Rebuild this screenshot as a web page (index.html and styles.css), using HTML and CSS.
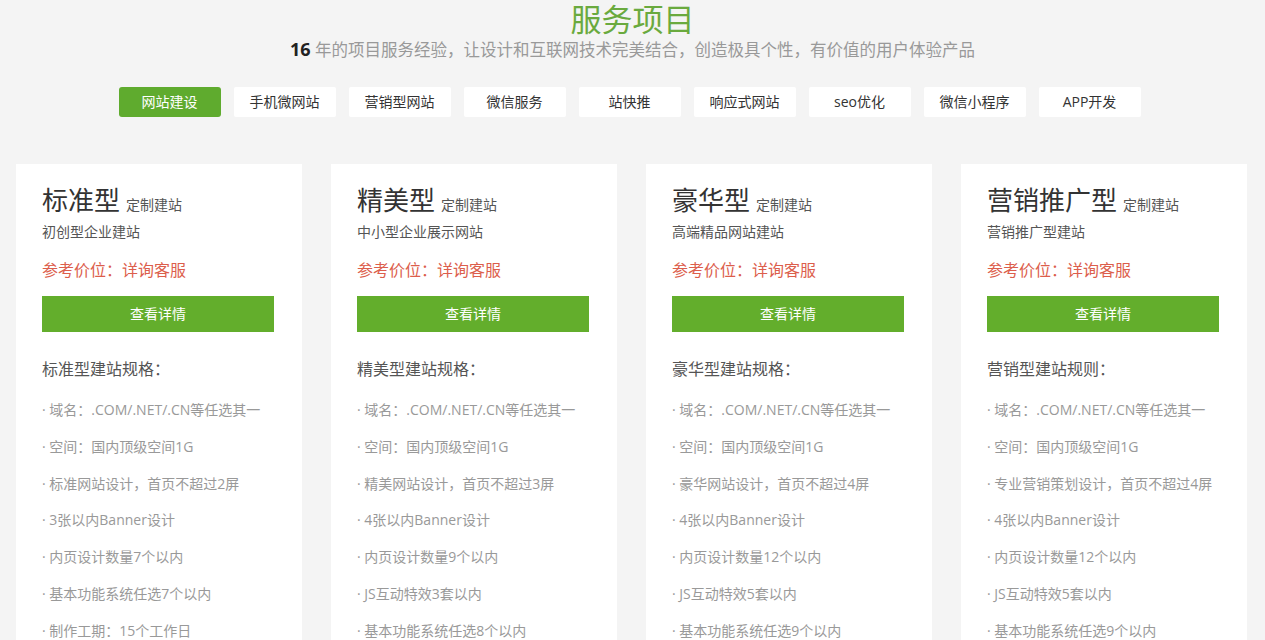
FILE: index.html
```html
<!DOCTYPE html>
<html lang="zh-CN">
<head>
<meta charset="utf-8">
<title>服务项目</title>
<link rel="stylesheet" href="styles.css">
</head>
<body>
<section class="services">
  <h2 class="title">服务项目</h2>
  <p class="subtitle"><b>16</b> 年的项目服务经验，让设计和互联网技术完美结合，创造极具个性，有价值的用户体验产品</p>
  <ul class="tabs">
    <li class="tab active">网站建设</li>
    <li class="tab">手机微网站</li>
    <li class="tab">营销型网站</li>
    <li class="tab">微信服务</li>
    <li class="tab">站快推</li>
    <li class="tab">响应式网站</li>
    <li class="tab">seo优化</li>
    <li class="tab">微信小程序</li>
    <li class="tab">APP开发</li>
  </ul>
  <div class="cards">
    <div class="card">
      <div class="card-title">标准型<span class="tag">定制建站</span></div>
      <div class="card-sub">初创型企业建站</div>
      <div class="price">参考价位：详询客服</div>
      <a class="btn">查看详情</a>
      <div class="spec-title">标准型建站规格：</div>
      <ul class="spec">
        <li>· 域名：.COM/.NET/.CN等任选其一</li>
        <li>· 空间：国内顶级空间1G</li>
        <li>· 标准网站设计，首页不超过2屏</li>
        <li>· 3张以内Banner设计</li>
        <li>· 内页设计数量7个以内</li>
        <li>· 基本功能系统任选7个以内</li>
        <li>· 制作工期：15个工作日</li>
      </ul>
    </div>
    <div class="card">
      <div class="card-title">精美型<span class="tag">定制建站</span></div>
      <div class="card-sub">中小型企业展示网站</div>
      <div class="price">参考价位：详询客服</div>
      <a class="btn">查看详情</a>
      <div class="spec-title">精美型建站规格：</div>
      <ul class="spec">
        <li>· 域名：.COM/.NET/.CN等任选其一</li>
        <li>· 空间：国内顶级空间1G</li>
        <li>· 精美网站设计，首页不超过3屏</li>
        <li>· 4张以内Banner设计</li>
        <li>· 内页设计数量9个以内</li>
        <li>· JS互动特效3套以内</li>
        <li>· 基本功能系统任选8个以内</li>
      </ul>
    </div>
    <div class="card">
      <div class="card-title">豪华型<span class="tag">定制建站</span></div>
      <div class="card-sub">高端精品网站建站</div>
      <div class="price">参考价位：详询客服</div>
      <a class="btn">查看详情</a>
      <div class="spec-title">豪华型建站规格：</div>
      <ul class="spec">
        <li>· 域名：.COM/.NET/.CN等任选其一</li>
        <li>· 空间：国内顶级空间1G</li>
        <li>· 豪华网站设计，首页不超过4屏</li>
        <li>· 4张以内Banner设计</li>
        <li>· 内页设计数量12个以内</li>
        <li>· JS互动特效5套以内</li>
        <li>· 基本功能系统任选9个以内</li>
      </ul>
    </div>
    <div class="card">
      <div class="card-title">营销推广型<span class="tag">定制建站</span></div>
      <div class="card-sub">营销推广型建站</div>
      <div class="price">参考价位：详询客服</div>
      <a class="btn">查看详情</a>
      <div class="spec-title">营销型建站规则：</div>
      <ul class="spec">
        <li>· 域名：.COM/.NET/.CN等任选其一</li>
        <li>· 空间：国内顶级空间1G</li>
        <li>· 专业营销策划设计，首页不超过4屏</li>
        <li>· 4张以内Banner设计</li>
        <li>· 内页设计数量12个以内</li>
        <li>· JS互动特效5套以内</li>
        <li>· 基本功能系统任选9个以内</li>
      </ul>
    </div>
  </div>
</section>
</body>
</html>
```

FILE: styles.css
```css
* { box-sizing: border-box; }
html, body {
  margin: 0;
  padding: 0;
  background: #f4f4f4;
  font-family: "Open Sans", "Noto Sans CJK SC", sans-serif;
  color: #333;
}
.services {
  width: 1265px;
  height: 640px;
  overflow: hidden;
}
.title {
  margin: 0;
  font-size: 31px;
  line-height: 38px;
  font-weight: 400;
  color: #6aaa3e;
  text-align: center;
}
.subtitle {
  margin: -1px 0 0;
  font-size: 16.5px;
  line-height: 24px;
  color: #999;
  text-align: center;
}
.subtitle b {
  color: #222;
  font-weight: 700;
  font-size: 18px;
}
.tabs {
  list-style: none;
  margin: 25px 0 0;
  padding: 0 6px 0 0;
  display: flex;
  justify-content: center;
  gap: 13px;
}
.tab {
  width: 102px;
  height: 30px;
  line-height: 30px;
  text-align: center;
  font-size: 14px;
  color: #333;
  background: #fff;
  border-radius: 2px;
}
.tab.active {
  background: #5fab2e;
  color: #fff;
  border-radius: 3px;
}
.cards {
  display: grid;
  grid-template-columns: repeat(4, 286px);
  gap: 29px;
  padding: 0 0 0 16px;
  margin-top: 47px;
}
.card {
  background: #fff;
  padding: 20px 28px 0 26px;
  height: 520px;
}
.card-title {
  font-size: 26px;
  line-height: 33px;
  color: #333;
  white-space: nowrap;
}
.tag {
  font-size: 14px;
  color: #555;
  margin-left: 6px;
}
.card-sub {
  font-size: 14px;
  line-height: 22px;
  color: #555;
}
.price {
  margin-top: 15px;
  font-size: 16px;
  line-height: 24px;
  color: #dc5e4c;
}
.btn {
  display: block;
  margin-top: 14px;
  height: 36px;
  line-height: 36px;
  background: #63ae2c;
  color: #fff;
  font-size: 14px;
  text-align: center;
}
.spec-title {
  margin-top: 25px;
  font-size: 16px;
  line-height: 24px;
  color: #555;
}
.spec {
  list-style: none;
  margin: 11px 0 0;
  padding: 0;
}
.spec li {
  font-size: 14px;
  line-height: 36.8px;
  color: #999;
  white-space: nowrap;
}
```
